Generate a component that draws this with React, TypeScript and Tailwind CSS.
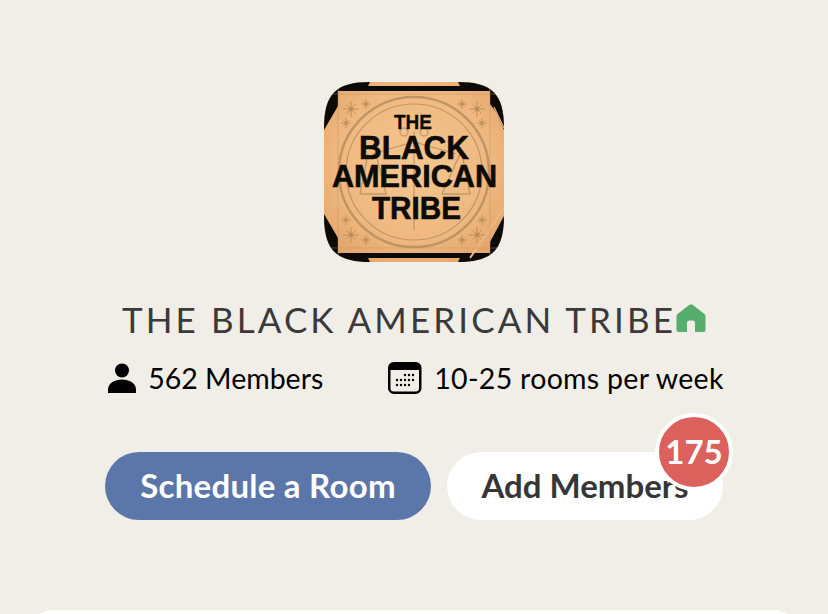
const Star = ({ x, y, r }: { x: number; y: number; r: number }) => (
  <g stroke="#a9804f" strokeWidth="0.9" fill="#a9804f" opacity="0.75">
    <line x1={x - r} y1={y} x2={x + r} y2={y} />
    <line x1={x} y1={y - r} x2={x} y2={y + r} />
    <line x1={x - r * 0.55} y1={y - r * 0.55} x2={x + r * 0.55} y2={y + r * 0.55} />
    <line x1={x - r * 0.55} y1={y + r * 0.55} x2={x + r * 0.55} y2={y - r * 0.55} />
    <circle cx={x} cy={y} r={r * 0.22} />
  </g>
);

const Logo = () => (
  <svg width="180" height="180" viewBox="0 0 180 180" className="block">
    <defs>
      <radialGradient id="peach" cx="50%" cy="45%" r="70%">
        <stop offset="0%" stopColor="#f5c792" />
        <stop offset="60%" stopColor="#efb980" />
        <stop offset="100%" stopColor="#e0a066" />
      </radialGradient>
      <clipPath id="sq">
        <path d="M0 46C0 12 12 0 46 0H134C168 0 180 12 180 46V134C180 168 168 180 134 180H46C12 180 0 168 0 134Z" />
      </clipPath>
    </defs>
    <g clipPath="url(#sq)">
      <rect width="180" height="180" fill="url(#peach)" />
      <g fill="#0d0a08">
        <path d="M0 0H46L44 4H136L134 0H180V48L172 30L166 22V9H14V24L0 48Z" />
        <path d="M0 132L14 156V171H166V160L180 134V180H134L136 176H44L46 180H0Z" />
      </g>
      <path d="M180 126L146 176" stroke="#efb980" strokeWidth="2" fill="none" />
      <path d="M170 25L180 46" stroke="#efb980" strokeWidth="1.2" fill="none" />
      <g fill="none" stroke="#b8915f" strokeWidth="0.7" opacity="0.6">
        <line x1="14" y1="5" x2="14" y2="175" />
        <line x1="166" y1="5" x2="166" y2="175" />
        <line x1="5" y1="12" x2="175" y2="12" />
        <line x1="5" y1="166" x2="175" y2="166" />
      </g>
      <g fill="none" stroke="#b08a5c" opacity="0.75">
        <circle cx="90" cy="90" r="75" strokeWidth="2.5" />
        <circle cx="90" cy="90" r="68" strokeWidth="1.2" />
        <path d="M90 50V148M48 72L90 60L132 72M44 72L36 112H62L52 72M136 72L118 112H146L138 72" strokeWidth="1.3" />
        <circle cx="80" cy="50" r="4" strokeWidth="1.3" />
        <circle cx="100" cy="50" r="4" strokeWidth="1.3" />
      </g>
      <Star x={27} y={27} r={8} />
      <Star x={42} y={22} r={5} />
      <Star x={22} y={41} r={5} />
      <Star x={153} y={27} r={8} />
      <Star x={138} y={22} r={5} />
      <Star x={158} y={41} r={5} />
      <Star x={27} y={153} r={8} />
      <Star x={42} y={158} r={5} />
      <Star x={22} y={138} r={5} />
      <Star x={153} y={153} r={8} />
      <Star x={138} y={158} r={5} />
      <Star x={158} y={138} r={5} />
      <g fill="#0d0a08" stroke="#0d0a08" strokeWidth="0.6" fontFamily="'Liberation Sans', sans-serif" fontWeight="700">
        <text x="70" y="47" fontSize="21" strokeWidth="0.3" textLength="38" lengthAdjust="spacingAndGlyphs">THE</text>
        <text x="35" y="77" fontSize="33" textLength="110" lengthAdjust="spacingAndGlyphs">BLACK</text>
        <text x="8" y="105" fontSize="32" textLength="165" lengthAdjust="spacingAndGlyphs">AMERICAN</text>
        <text x="48" y="137" fontSize="32" textLength="89" lengthAdjust="spacingAndGlyphs">TRIBE</text>
      </g>
    </g>
  </svg>
);

const PersonIcon = () => (
  <svg width="28" height="30" viewBox="0 0 28 30" className="block shrink-0">
    <circle cx="14" cy="7.500" r="7" fill="#000" />
    <path d="M0 30V26.500C0 20 7 16.500 14 16.500S28 20 28 26.500V30Z" fill="#000" />
  </svg>
);

const CalendarIcon = () => (
  <svg width="34" height="32" viewBox="0 0 34 32" className="block shrink-0">
    <rect x="1.250" y="1.250" width="31" height="29.500" rx="4.500" fill="none" stroke="#000" strokeWidth="2.500" />
    <path d="M1 6C1 3 3 1 6 1H28C31 1 33 3 33 6V8H1Z" fill="#000" />
    <g fill="#000">
      {[
        [17, 13], [21, 13], [25, 13],
        [9, 18], [13, 18], [17, 18], [21, 18], [25, 18],
        [9, 23], [13, 23], [17, 23], [21, 23],
      ].map(([x, y]) => (
        <circle key={`${x}-${y}`} cx={x} cy={y} r="1.200" />
      ))}
    </g>
  </svg>
);

const HomeIcon = () => (
  <svg width="30" height="28" viewBox="0 0 30 28" className="block shrink-0">
    <path
      d="M13.500.8a2.500 2.500 0 0 1 3 0L28.500 10a2.500 2.500 0 0 1 1 2V26a2 2 0 0 1-2 2H19V19a2.500 2.500 0 0 0-2.500-2.500H13.500A2.500 2.500 0 0 0 11 19V28H2.500a2 2 0 0 1-2-2V12a2.500 2.500 0 0 1 1-2Z"
      fill="#56ae6c"
    />
  </svg>
);

export default function App() {
  return (
    <div className="h-[614px] w-[828px] overflow-hidden bg-[#f0eee6] font-['Lato','Noto_Sans',sans-serif] flex flex-col items-center">
      <div className="mt-[82px] h-[180px] w-[180px]">
        <Logo />
      </div>

      <div className="mt-[39px] flex h-[36px] items-center">
        <span className="text-[35px] leading-[36px] tracking-[3.100px] text-[#3a3a3a] whitespace-nowrap">
          THE BLACK AMERICAN TRIBE
        </span>
        <span className="-mt-[2px]">
          <HomeIcon />
        </span>
      </div>

      <div className="mt-[24px] flex h-[34px] items-center pl-[4px] text-[28.500px] leading-[34px] text-black whitespace-nowrap">
        <PersonIcon />
        <span className="ml-[12px]">562 Members</span>
        <span className="ml-[65px]">
          <CalendarIcon />
        </span>
        <span className="ml-[12px] tracking-[0.300px]">10-25 rooms per week</span>
      </div>

      <div className="mt-[57px] flex gap-[16px]">
        <div className="flex h-[68px] w-[326px] items-center justify-center rounded-[34px] bg-[#5b76a9] text-[33px] font-bold tracking-[0.250px] text-white whitespace-nowrap">
          Schedule a Room
        </div>
        <div className="relative flex h-[68px] w-[276px] items-center justify-center rounded-[34px] bg-white text-[33px] font-bold text-[#363636] whitespace-nowrap">
          Add Members
          <div className="absolute -top-[39px] -right-[10px] flex h-[78px] w-[78px] items-center justify-center rounded-full border-[4px] border-white bg-[#dc605c] text-[33px] font-bold text-white">
            175
          </div>
        </div>
      </div>

      <div className="mt-[90px] h-[40px] w-[776px] shrink-0 rounded-t-[28px] bg-white" />
    </div>
  );
}
